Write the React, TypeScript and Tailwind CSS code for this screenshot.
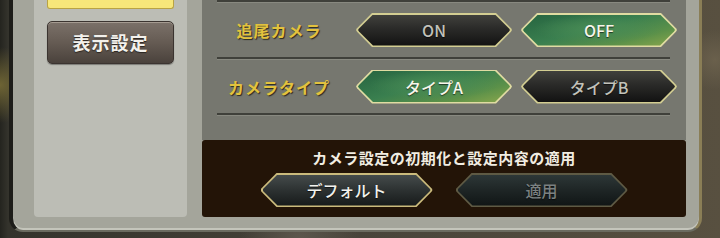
import React from "react";

const font = "font-['Noto_Sans_CJK_JP','Noto_Sans',sans-serif]";

function HexButton({
  text,
  variant,
  width = 156,
  height = 34,
}: {
  text: string;
  variant: "dark" | "green" | "default" | "disabled";
  width?: number;
  height?: number;
}) {
  const border =
    variant === "green"
      ? "bg-[#e0dca2]"
      : variant === "dark"
      ? "bg-[#d3ce92]"
      : variant === "default"
      ? "bg-[#cbbb7c]"
      : "bg-[#5e5a44]";
  const fill =
    variant === "green"
      ? "bg-[radial-gradient(ellipse_at_50%_45%,#4a8c55_0%,transparent_60%),linear-gradient(165deg,#266440_0%,#3a7f4f_45%,#5c9149_75%,#8aa74c_100%)] text-[#f6f6ea]"
      : variant === "dark"
      ? "bg-[linear-gradient(180deg,#40403c_0%,#2a2a28_45%,#121212_100%)] text-[#c2c2ba]"
      : variant === "default"
      ? "bg-[linear-gradient(180deg,#454b4b_0%,#2c3131_50%,#171a1a_100%)] text-[#f2f2ee]"
      : "bg-[linear-gradient(180deg,#2d3737_0%,#1e2525_50%,#101515_100%)] text-[#7b8181]";
  return (
    <div
      className={`${border} px-[2px] py-[1.5px] [clip-path:polygon(16px_0,calc(100%_-_16px)_0,calc(100%_-_1px)_45%,100%_50%,calc(100%_-_1px)_55%,calc(100%_-_16px)_100%,16px_100%,1px_55%,0_50%,1px_45%)]`}
      style={{ width, height }}
    >
      <div
        className={`${fill} h-full w-full flex items-center justify-center text-[16px] font-medium [text-shadow:0_1px_1px_rgba(0,0,0,0.6)] [clip-path:polygon(15px_0,calc(100%_-_15px)_0,calc(100%_-_1px)_45%,100%_50%,calc(100%_-_1px)_55%,calc(100%_-_15px)_100%,15px_100%,1px_55%,0_50%,1px_45%)]`}
      >
        {text}
      </div>
    </div>
  );
}

function Separator() {
  return (
    <div className="ml-[15px] w-[453px] flex flex-col">
      <div className="h-[2px] bg-[#3f403a]" />
      <div className="h-px bg-[#888980]" />
    </div>
  );
}

function Row({
  label,
  left,
  right,
  leftActive,
  h,
}: {
  label: string;
  left: string;
  right: string;
  leftActive: boolean;
  h: string;
}) {
  return (
    <div className={`${h} flex items-center`}>
      <div className="w-[154px] text-center text-[16px] font-bold tracking-[1px] text-[#e2c23e] [text-shadow:1px_1px_1px_#2b2a20]">
        {label}
      </div>
      <div className="flex gap-[9px]">
        <HexButton text={left} variant={leftActive ? "green" : "dark"} />
        <HexButton text={right} variant={leftActive ? "dark" : "green"} />
      </div>
    </div>
  );
}

export default function App() {
  return (
    <div
      className={`${font} w-[720px] h-[238px] overflow-hidden flex items-start pl-[9px] bg-[radial-gradient(circle_at_0px_85px,#6e6434_0px,transparent_38px),radial-gradient(circle_at_715px_60px,#6a604c_0px,transparent_30px),radial-gradient(circle_at_300px_240px,#5c574d_0px,transparent_60px),linear-gradient(90deg,#24241f_0px,#34332c_8px,#48443a_50%,#585040_100%)]`}
    >
      <div className="w-[693px] h-[232px] shrink-0 bg-[#a4a59b] border-l-4 border-l-[#1d1d19] border-r-[3px] border-r-[#8a7e56] border-b-2 border-b-[#6b6b60] rounded-b-[14px] flex pl-[21px] pr-[13px] pb-[13px] gap-[15px] shadow-[inset_0_-2px_0_#c4c5bb]">
        {/* Sidebar */}
        <div className="w-[153px] h-[217px] bg-[#bcbdb5] rounded-b-[4px] flex flex-col pl-[13px]">
          <div className="w-[127px] h-[9px] bg-[#f7e77a] rounded-b-[3px] border-x border-b border-[#b9a344]" />
          <div className="mt-[12px] w-[127px] h-[43px] rounded-[5px] border border-[#3b3430] bg-[linear-gradient(180deg,#7b7169_0%,#655b53_50%,#4a423c_100%)] shadow-[inset_0_1px_0_#a59b91,0_1px_1px_rgba(0,0,0,0.35)] flex items-center justify-center text-[18px] font-bold text-[#f3f1ec] [text-shadow:0_1px_1px_#2a2420] tracking-[1px]">
            表示設定
          </div>
        </div>

        {/* Content */}
        <div className="w-[484px] flex flex-col">
          <div className="h-[140px] bg-[#76776f] flex flex-col">
            <Separator />
            <Row h="h-[54px]" label="追尾カメラ" left="ON" right="OFF" leftActive={false} />
            <Separator />
            <Row h="h-[53px]" label="カメラタイプ" left="タイプA" right="タイプB" leftActive={true} />
            <Separator />
          </div>
          <div className="h-[77px] bg-[#231407] rounded-[3px] flex flex-col items-center pt-[8px]">
            <div className="h-[20px] leading-[20px] text-[15px] font-bold text-[#f1ede2] tracking-[0.5px]">
              カメラ設定の初期化と設定内容の適用
            </div>
            <div className="mt-[5px] flex gap-[23px]">
              <HexButton text="デフォルト" variant="default" width={172} height={34} />
              <HexButton text="適用" variant="disabled" width={172} height={34} />
            </div>
          </div>
        </div>
      </div>
    </div>
  );
}
